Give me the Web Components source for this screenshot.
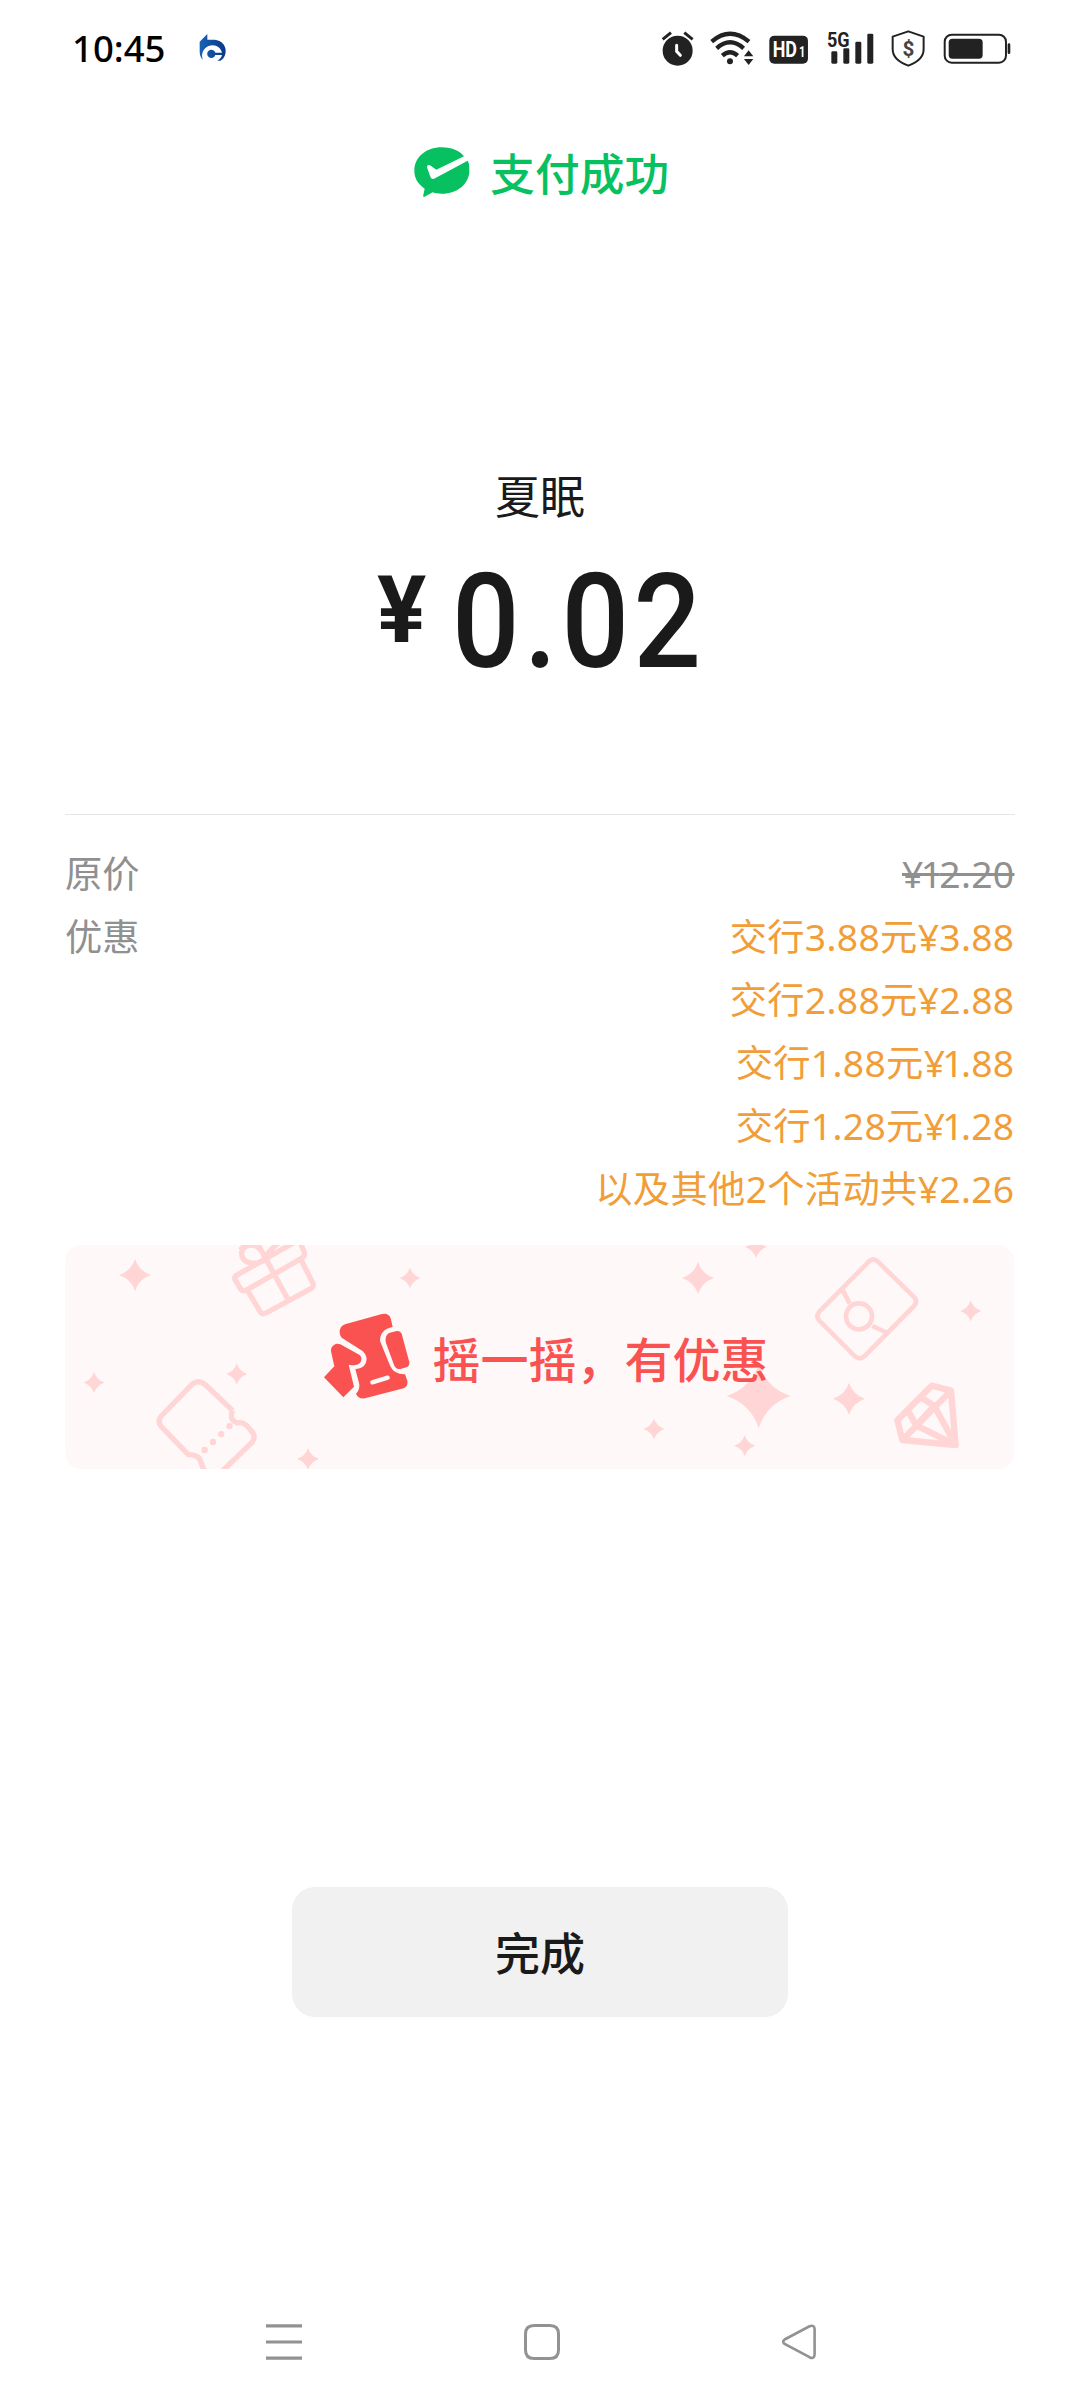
<!DOCTYPE html>
<html lang="zh-CN">
<head>
<meta charset="utf-8">
<title>支付成功</title>
<style>
html,body{margin:0;background:#fff}
body{font-family:"Noto Sans CJK SC",sans-serif;color:#1a1a1a}
</style>
</head>
<body>
<pay-page></pay-page>
<script>
const define = (name, html) => customElements.define(name, class extends HTMLElement {
  constructor() {
    super();
    this.attachShadow({mode: 'open'}).innerHTML = html;
  }
});

define('status-bar', `
<style>
:host{display:flex;height:96px;box-sizing:border-box;padding:0 69.2px 0 72px;align-items:center}
.time{font:500 36.5px/40px "Noto Sans",sans-serif;color:#000;width:127px}
svg{display:block;flex:none}
.icons{display:flex;margin-left:auto;gap:14.6px;color:#222;fill:currentColor}
text{font-family:Roboto,sans-serif;font-weight:700}
</style>
<span class="time">10:45</span>
<svg width="27" height="30" viewBox="448 54 81 90">
  <defs><linearGradient id="b" x1="0" y1="0" x2="1" y2="0"><stop offset="0" stop-color="#1b62b5"/><stop offset="1" stop-color="#073a85"/></linearGradient></defs>
  <path fill="url(#b)" fill-rule="evenodd" d="M450 80L473 57V74H495C516 76 528 91 528 107C528 122 521 132 512 137H503C511 133 516 126 517 120H497A12.500 12.500 0 1 1 497 113H517C513 100 503 91 489 91C471 91 458 104 457 122L459 134C452 127 450 119 450 109Z"/>
</svg>
<div class="icons">
<svg width="33.3" height="38.3" viewBox="64 40 100 115"><circle cx="114" cy="105" r="45"/><path d="M69 71L94 51M134 51L159 71" stroke="#222" stroke-width="9" fill="none"/><path d="M111 89V107L122 119" stroke="#fff" stroke-width="9" stroke-linecap="round" fill="none"/></svg>
<svg width="45.3" height="38.3" viewBox="208 40 136 115"><circle cx="271" cy="137" r="9"/><path d="M216 78Q271 31 328 78M231 98Q271 62 312 98M248 120Q271 99 294 120" stroke="#222" stroke-width="13" fill="none"/><path d="M327 104L341 122H313ZM313 130H341L327 148Z"/></svg>
<svg width="39.3" height="38.3" viewBox="388 40 118 115"><rect x="389" y="60" width="116" height="84" rx="15"/><g fill="#fff"><text x="399" y="125" font-size="66" textLength="73" lengthAdjust="spacingAndGlyphs">HD<tspan font-size="42"></tspan></text><text x="478" y="125" font-size="42" textLength="19" lengthAdjust="spacingAndGlyphs">1</text></g></svg>
<svg width="47.3" height="38.3" viewBox="562 40 142 115" style="margin-left:4px"><text x="562" y="94" font-size="61" textLength="68" lengthAdjust="spacingAndGlyphs">5G</text><rect x="575" y="107" width="18" height="37" rx="4"/><rect x="611" y="98" width="18" height="46" rx="4"/><rect x="647" y="78" width="18" height="66" rx="4"/><rect x="683" y="54" width="18" height="90" rx="4"/></svg>
<svg width="34.3" height="38.3" viewBox="755 40 103 115" style="margin-left:2.4px"><path d="M807 47L853 63V100C853 124 838 139 807 150C776 139 760 124 760 100V63Z" fill="none" stroke="#222" stroke-width="6" stroke-linejoin="round"/><text x="807" y="120" font-size="62" text-anchor="middle" fill="#444">$</text></svg>
<svg width="68" height="38.3" viewBox="910 40 204 115" style="margin-left:2.7px"><rect x="915" y="57" width="184" height="84" rx="21" fill="none" stroke="#222" stroke-width="6"/><rect x="927" y="69" width="102" height="60" rx="11"/><rect x="1104" y="83" width="8" height="32" rx="4"/></svg>
</div>`);

define('success-title', `
<style>
:host{display:flex;justify-content:center;align-items:center;gap:20.5px;height:151px;padding-left:3px;color:#07c160;font-size:44.7px;font-weight:500;line-height:60px}
svg{display:block}
</style>
<svg width="56" height="50" viewBox="72 50 168 150"><path fill="#07c160" d="M155 51C188 51 211 63 222 78L139 118L120 105Q111 101 111 111L121 139Q125 149 135 144L233 91C238 98 238 107 238 121C238 160 203 190 155 190C145 190 136 189 128 186L104 199Q98 201 100 194L104 175C83 160 73 143 73 121C73 81 108 51 155 51Z"/></svg>
<slot></slot>`);

define('pay-amount', `
<style>
:host{display:flex;flex-direction:column}
.name{font-size:45px;line-height:60px;height:60px;text-align:center}
.sum{display:flex;align-items:flex-start;font-family:Roboto,sans-serif;font-weight:500;margin:20px 0 0 377px;height:150px}
.cur{font-size:92px;line-height:108px;padding-top:12px;width:75px;font-weight:700}
.num{font-size:132px;line-height:154px;letter-spacing:5px;transform:scaleX(.9);transform-origin:0 0}
</style>
<div class="name"><slot></slot></div>
<div class="sum"><span class="cur">¥</span><span class="num"><slot name="value"></slot></span></div>`);

define('detail-row', `
<style>
:host{display:flex;justify-content:space-between;font-family:"Noto Sans","Noto Sans CJK SC",sans-serif;font-size:37.3px;line-height:63px;color:#909090}
.v{display:flex;flex-direction:column;align-items:flex-end;color:#f19d38;letter-spacing:.3px}
:host([old]) .v{color:#909090;text-decoration:line-through}
</style>
<span><slot name="label"></slot></span><div class="v"><slot></slot></div>`);

const star = (x, y, r) => `<path transform="translate(${x} ${y}) scale(${r})" d="M0-1Q.25-.25 1 0Q.25 .25 0 1Q-.25 .25-1 0Q-.25-.25 0-1Z"/>`;
define('shake-banner', `
<style>
:host{display:grid;width:949px;height:224px;border-radius:16px;overflow:hidden;background:#fff8f8}
svg{display:block}
.bg{grid-area:1/1}
.fg{grid-area:1/1;display:flex;align-items:center;gap:23px;padding-left:258.500px;color:#fa5151;font-size:48px;font-weight:500;z-index:1}
.fg svg{margin-top:-3px}
</style>
<svg class="bg" width="949" height="224" viewBox="65 1245 949 224">
<g fill="#ffd5d5">${[[135,1275,16],[410,1278,10.5],[236.7,1374,10.5],[94,1382.5,10.5],[308,1459,11],[698,1278,16],[756,1247,11],[970.7,1311,10.5],[758.7,1396,32],[849,1398.7,16],[654,1429,10.5],[744.7,1445.7,10.5]].map(a => star(...a)).join('')}</g>
<g fill="none" stroke="#ffd5d5" stroke-linejoin="round">
<g transform="translate(50 1230) scale(.33333)" stroke-width="16">
<path d="M558 137L747 29L763 67Q765 79 755 85L588 181Q577 185 571 175L556 151Q552 142 558 137ZM594 184L630 244Q637 255 648 249L784 175Q793 169 788 158L754 91M625 45L713 207M650 88C628 102 595 105 580 87C569 70 577 48 600 45C622 43 633 60 646 81C660 57 678 45 700 28M571 60Q585 42 610 46"/>
<path d="M548 542L467 465Q446 447 427 462L334 558Q320 575 335 591L415 674Q448 672 454 700L465 728M548 542Q536 570 562 579Q584 573 604 603Q620 619 606 637L510 730"/>
<path d="M464 660L541 586" stroke-width="19" stroke-linecap="round" stroke-dasharray="0 34.5"/>
</g>
<g transform="translate(620 1230) scale(.33333)">
<path stroke-width="14" d="M747 94Q760 82 773 94L883 202Q894 215 882 228L733 379Q719 391 705 379L598 272Q586 259 598 245ZM667 178L689 221M757 288L803 309"/><circle cx="717" cy="259" r="39" stroke-width="14"/>
<path stroke-width="19" d="M935 467L993 482L1007 645L847 630L832 571ZM863 541L889 586L1007 645L943 528L903 502M847 630L993 482M889 586L943 528"/>
</g></g>
</svg>
<div class="fg">
<svg width="86" height="86" viewBox="823 247 258 258"><g fill="#fa5151">
<path d="M886 281L997 250Q1017 246 1023 263L1029 289Q991 296 991 331L1022 407Q1034 432 1066 431L1073 450Q1076 466 1062 473L946 503Q926 506 919 489Q930 479 929 461L917 416Q950 413 951 384Q948 366 934 358L876 321Q870 315 870 305Q870 287 886 281Z"/>
<path d="M1018 307L1041 301Q1052 299 1056 309L1079 395Q1080 406 1070 410L1052 415Q1040 416 1034 405L1009 337Q1004 316 1018 307Z"/>
<path d="M853 343Q861 336 872 341L930 373Q939 382 933 394Q923 408 897 402L913 468L881 500L823 440L854 407L844 362Q843 349 853 343Z"/></g>
<path d="M968 455L1014 441" stroke="#fff8f8" stroke-width="13" stroke-linecap="round"/></svg>
<span><slot></slot></span>
</div>`);

define('done-button', `
<style>
:host{display:block;width:496px;height:130px}
button{all:unset;display:flex;width:100%;height:100%;align-items:center;justify-content:center;border-radius:23px;background:#f1f1f1;font-size:45px;font-weight:500;line-height:60px;color:#1a1a1a}
</style>
<button><slot></slot></button>`);

define('nav-bar', `
<style>
:host{display:flex;justify-content:space-between;padding:0 263px 0 266px}
svg{display:block;fill:none;stroke:#929292;stroke-width:3}
</style>
<svg width="36" height="36"><path d="M0 1.800H36M0 18H36M0 34.200H36" stroke-width="3.2"/></svg>
<svg width="36" height="36"><path d="M10 1.500H26Q34.500 1.500 34.500 10V26Q34.500 34.500 26 34.500H10Q1.500 34.500 1.500 26V10Q1.500 1.500 10 1.500Z"/></svg>
<svg width="35" height="36"><path stroke-width="2.6" d="M2.600 15.500L27.500 2.300Q32.500 .5 32.600 5V30.500Q32.500 35.500 27.500 33.200L2.600 20Q-.2 17.700 2.600 15.500Z"/></svg>`);

define('pay-page', `
<style>
:host{display:flex;flex-direction:column;width:1080px;height:2408px;background:#fff;overflow:hidden}
status-bar,success-title,pay-amount,nav-bar,.list{flex:none}
.k{letter-spacing:-2.7px}
pay-amount{margin-top:218px;height:230px}
hr{flex:none;border:0;height:1px;background:#e5e5e5;width:950px;margin:119px 0 27px 65px}
.list{padding:0 65.5px 0 65px;display:flex;flex-direction:column}
shake-banner{flex:none;margin:25px 0 0 65px}
done-button{flex:none;margin:418px auto 0 292px}
nav-bar{margin-top:307px}
</style>
<status-bar></status-bar>
<success-title>支付成功</success-title>
<pay-amount>夏眠<span slot="value">0.02</span></pay-amount>
<hr>
<div class="list">
<detail-row old><span slot="label">原价</span><span><span class="k">¥1</span>2.20</span></detail-row>
<detail-row><span slot="label">优惠</span><span>交行3.88元¥3.88</span><span>交行2.88元¥2.88</span><span>交行1.88元<span class="k">¥1</span>.88</span><span>交行1.28元<span class="k">¥1</span>.28</span><span>以及其他2个活动共¥2.26</span></detail-row>
</div>
<shake-banner>摇一摇，有优惠</shake-banner>
<done-button>完成</done-button>
<nav-bar></nav-bar>`);
</script>
</body>
</html>
